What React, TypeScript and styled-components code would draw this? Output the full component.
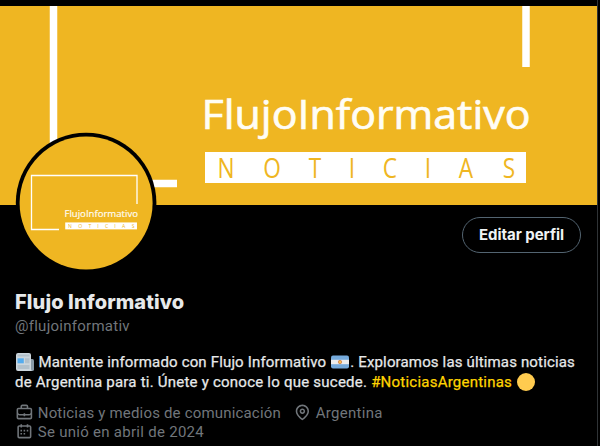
import React from 'react';
import styled, { createGlobalStyle } from 'styled-components';

const GlobalStyle = createGlobalStyle`
  * { box-sizing: border-box; }
  body { margin: 0; background: #000; overflow: hidden; }
`;

const Page = styled.main`
  width: 598px;
  height: 446px;
  padding-top: 6px;
  border-right: 1px solid #2f3336;
  background: #000;
  color: #e7e9ea;
  font: 400 15px/20px Roboto, "Noto Sans", sans-serif;
  white-space: nowrap;
`;

const Banner = styled.svg`
  display: block;
  width: 597px;
  height: 199px;
`;

const Profile = styled.section`
  padding: 0 16px 0 15px;
`;

const TopRow = styled.div`
  display: flex;
  justify-content: space-between;
  align-items: flex-start;
  height: 85px;
`;

const Avatar = styled.svg`
  display: block;
  position: relative;
  flex: none;
  width: 142px;
  height: 142px;
  margin-top: -73px;
`;

const EditButton = styled.button`
  width: 119px;
  height: 36px;
  margin-top: 12px;
  padding: 0;
  border: 1px solid #536471;
  border-radius: 18px;
  background: transparent;
  color: #eff3f4;
  font: 700 15px/20px Inter, sans-serif;
  letter-spacing: -0.05px;
`;

const Name = styled.h1`
  margin: 0 0 2px;
  font: 800 20px/24px Inter, sans-serif;
  letter-spacing: 0.1px;
`;

const Handle = styled.div`
  color: #71767b;
  letter-spacing: 0.26px;
`;

const Bio = styled.div`
  margin-top: 16px;
  -webkit-text-stroke: 0.25px currentColor;
`;

const Line = styled.div`
  display: flex;
  align-items: center;
  height: 20px;
`;

const Copy = styled.span<{ $spacing: number; $accent?: boolean }>`
  letter-spacing: ${(p) => p.$spacing}px;
  color: ${(p) => (p.$accent ? '#ffd400' : 'inherit')};
  white-space: pre;
`;

const Emoji = styled.svg<{ $left?: number; $right?: number }>`
  flex: none;
  width: 18px;
  height: 18px;
  margin: 0 ${(p) => p.$right ?? 0}px 0 ${(p) => p.$left ?? 0}px;
`;

const Meta = styled.div`
  margin-top: 11px;
  color: #71767b;
`;

const MetaRow = styled.div`
  display: flex;
  align-items: center;
  gap: 12px;
  height: 19px;
`;

const MetaItem = styled.span`
  display: flex;
  align-items: center;
  gap: 4px;
`;

const Icon = styled.svg`
  flex: none;
  width: 18.75px;
  height: 18.75px;
  fill: currentColor;
`;

const YELLOW = '#efb622';
const LETTERS: [string, number][] = [
  ['N', 226], ['O', 272], ['T', 315], ['I', 352], ['C', 390], ['I', 428], ['A', 466], ['S', 509],
];

function Wordmark() {
  return (
    <g fontFamily='"Open Sans", "Noto Sans", sans-serif'>
      <text
        x="201.5"
        y="129"
        fontSize="40"
        fill="#fffdf5"
        stroke="#fffdf5"
        strokeWidth=".7"
        textLength="329"
        lengthAdjust="spacingAndGlyphs"
      >
        FlujoInformativo
      </text>
      <rect x="205" y="152" width="321" height="31" fill="#fff" />
      {LETTERS.map(([letter, x]) => (
        <text
          key={x}
          transform={`translate(${x} 178) scale(.84 1)`}
          fontSize="27"
          fill={YELLOW}
          textAnchor="middle"
        >
          {letter}
        </text>
      ))}
    </g>
  );
}

export default function App() {
  return (
    <Page>
      <GlobalStyle />
      <Banner viewBox="0 6 597 199">
        <rect y="6" width="597" height="199" fill={YELLOW} />
        <path d="M53.5 0V183.5H177M526 0V67" fill="none" stroke="#fff" strokeWidth="7.5" />
        <Wordmark />
      </Banner>
      <Profile>
        <TopRow>
          <Avatar viewBox="15 132 142 142">
            <circle cx="86.1" cy="203" r="70.3" fill="#000" />
            <circle cx="86.1" cy="203" r="66.5" fill={YELLOW} />
            <path d="M59 229.5H31.5V175.5H137V204" fill="none" stroke="#fff" strokeWidth="1.3" />
            <g transform="translate(65 217.3) scale(.2235) translate(-204 -129)">
              <Wordmark />
            </g>
          </Avatar>
          <EditButton>Editar perfil</EditButton>
        </TopRow>
        <Name>Flujo Informativo</Name>
        <Handle>@flujoinformativ</Handle>
        <Bio>
          <Line>
            <Emoji viewBox="0 0 18 18" $left={1} $right={4.5}>
              <path d="M13 6h3.5Q18 6 18 8v8.5q0 1.5-2 1.5h-3z" fill="#8899a6" />
              <path d="M0 2Q0 0 2 0h11q2 0 2 2v14q0 2 1.5 2H2q-2 0-2-2z" fill="#ccd6dd" />
              <path d="M1.5 1.5h12v2h-12zM9 5.3h4.5v5H9zM1.5 12h12v4h-12z" fill="#b3c1cb" />
              <path d="M1.5 5.3h6.3v5H1.5z" fill="#55acee" />
            </Emoji>
            <Copy $spacing={0.16}>Mantente informado con Flujo Informativo</Copy>
            <Emoji viewBox="0 0 18 18" $left={5} $right={1}>
              <rect y="2.5" width="18" height="13" rx="2" fill="#75aadb" />
              <path d="M0 6.8h18v4.4H0z" fill="#eee" />
              <circle cx="9" cy="9" r="1.7" fill="#fcbf49" stroke="#c16540" strokeWidth=".6" />
            </Emoji>
            <Copy $spacing={0.15}>. Exploramos las últimas noticias</Copy>
          </Line>
          <Line>
            <Copy $spacing={0.23}>de Argentina para ti. Únete y conoce lo que sucede. </Copy>
            <Copy $spacing={0.23} $accent>#NoticiasArgentinas</Copy>
            <Emoji viewBox="0 0 18 18" $left={5}>
              <circle cx="9" cy="9" r="9" fill="#ffcb4f" />
            </Emoji>
          </Line>
        </Bio>
        <Meta>
          <MetaRow>
            <MetaItem>
              <Icon viewBox="0 0 24 24">
                <path d="M19.5 6H17V4.5C17 3.12 15.88 2 14.5 2h-5C8.12 2 7 3.12 7 4.5V6H4.5C3.12 6 2 7.12 2 8.5v10C2 19.88 3.12 21 4.5 21h15c1.38 0 2.5-1.12 2.5-2.5v-10C22 7.12 20.88 6 19.5 6zM9 4.5c0-.28.23-.5.5-.5h5c.28 0 .5.22.5.5V6H9V4.5zm11 14c0 .28-.22.5-.5.5h-15c-.27 0-.5-.22-.5-.5v-3.04c.59.35 1.27.54 2 .54h5v1h2v-1h5c.73 0 1.41-.19 2-.54v3.04zm0-6.49c0 1.1-.9 1.99-2 1.99h-5v-1h-2v1H6c-1.1 0-2-.9-2-2V8.5c0-.28.23-.5.5-.5h15c.28 0 .5.22.5.5v3.51z" />
              </Icon>
              <Copy $spacing={0.18}>Noticias y medios de comunicación</Copy>
            </MetaItem>
            <MetaItem>
              <Icon viewBox="0 0 24 24">
                <path d="M12 7c-1.93 0-3.5 1.57-3.5 3.5S10.07 14 12 14s3.5-1.57 3.5-3.5S13.93 7 12 7zm0 5c-.827 0-1.5-.673-1.5-1.5S11.173 9 12 9s1.5.673 1.5 1.5S12.827 12 12 12zm0-10c-4.687 0-8.5 3.813-8.5 8.5 0 5.967 7.621 11.116 7.945 11.332l.555.37.555-.37c.324-.216 7.945-5.365 7.945-11.332C20.5 5.813 16.687 2 12 2zm0 17.77c-1.665-1.241-6.5-5.196-6.5-9.27C5.5 6.916 8.416 4 12 4s6.5 2.916 6.5 6.5c0 4.073-4.835 8.028-6.5 9.27z" />
              </Icon>
              <Copy $spacing={0.3}>Argentina</Copy>
            </MetaItem>
          </MetaRow>
          <MetaRow>
            <MetaItem>
              <Icon viewBox="0 0 24 24">
                <path d="M7 4V3h2v1h6V3h2v1h1.5C19.89 4 21 5.12 21 6.5v12c0 1.38-1.11 2.5-2.5 2.5h-13C4.12 21 3 19.88 3 18.5v-12C3 5.12 4.12 4 5.5 4H7zm0 2H5.5c-.27 0-.5.22-.5.5v12c0 .28.23.5.5.5h13c.28 0 .5-.22.5-.5v-12c0-.28-.22-.5-.5-.5H17v1h-2V6H9v1H7V6zm0 6h2v-2H7v2zm0 4h2v-2H7v2zm4-4h2v-2h-2v2zm0 4h2v-2h-2v2zm4-4h2v-2h-2v2z" />
              </Icon>
              <Copy $spacing={0.28}>Se unió en abril de 2024</Copy>
            </MetaItem>
          </MetaRow>
        </Meta>
      </Profile>
    </Page>
  );
}
